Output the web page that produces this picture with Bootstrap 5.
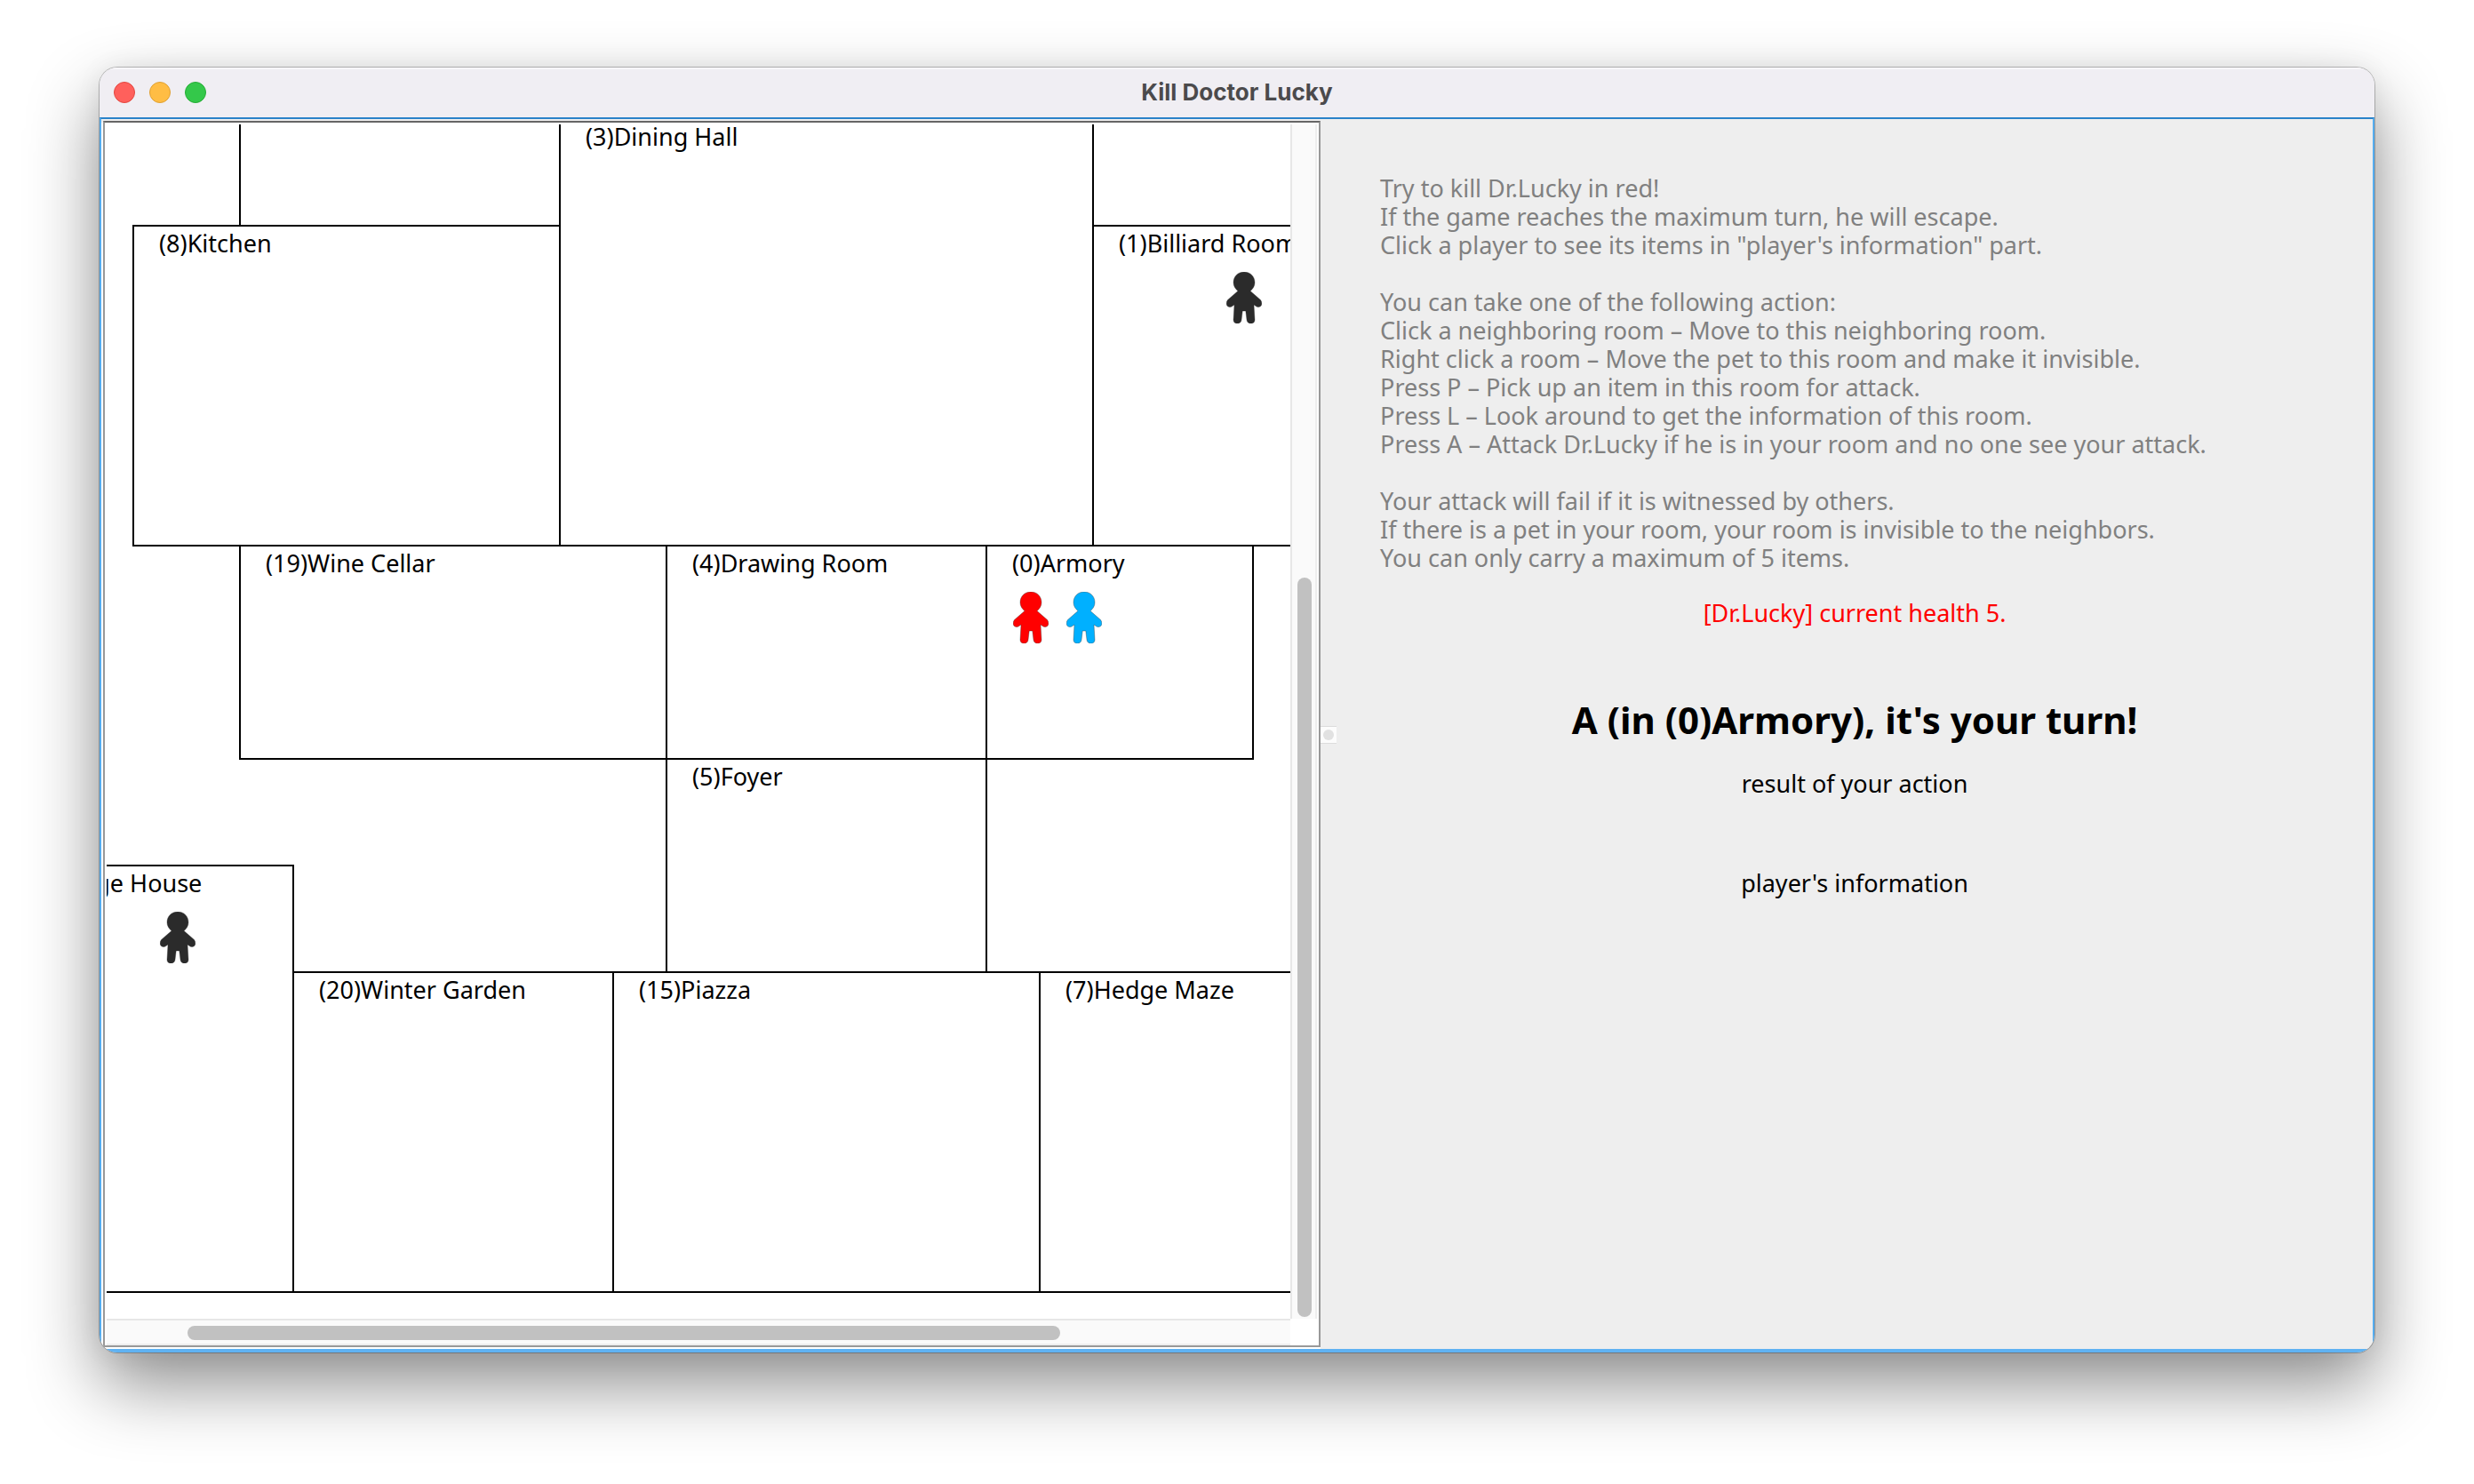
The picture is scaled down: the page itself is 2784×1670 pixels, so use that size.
<!DOCTYPE html>
<html lang="en">
<head>
<meta charset="utf-8">
<meta name="viewport" content="width=device-width, initial-scale=1">
<title>Kill Doctor Lucky</title>
<link href="https://cdn.jsdelivr.net/npm/bootstrap@5.3.0/dist/css/bootstrap.min.css" rel="stylesheet">
<style>
  body { padding: 76px 112px 148px; background: #fff; color: #000; font-family: "Noto Sans", "Open Sans", sans-serif; font-size: 27px; line-height: 32px; }
  .app-window { border-radius: 20px; background: #eee; box-shadow: 0 0 0 1px rgba(0,0,0,.24), 0 36px 80px rgba(0,0,0,.45), 0 0 30px rgba(0,0,0,.06); }
  .title-bar { height: 56px; padding: 0 16px; background: #f0eef3; box-shadow: inset 0 2px 0 #f8f7fa; }
  .title-bar h1 { font: 700 26px/32px Inter, sans-serif; color: #4b4a4c; }
  .lights { flex: 1 1 0; gap: 16px; }
  .light { width: 24px; height: 24px; border: 1px solid; border-radius: 50%; padding: 0; }
  .light-close { background: #ff605c; border-color: #e2463f; }
  .light-min { background: #ffbd44; border-color: #dfa033; }
  .light-zoom { background: #34c84a; border-color: #25ac35; }
  .split { border: 2px solid #55acee; border-top-color: #2a82c9; border-bottom: 4px solid #5fb2f2; }
  .map-side { flex: 0 0 53.68%; padding: 2px 0 2px 2px; background: linear-gradient(#eee 4px, #fff 4px); }
  .map-pane { display: grid; grid-template: minmax(0, 1fr) 30px / minmax(0, 1fr) 32px; height: 100%; padding: 2px 0 0 2px; border: 2px solid #999; border-top-color: #666; background: #fff; }
  /* rooms sit on a 60px grid; --x/--y/--w/--h are counted in cells */
  .room { position: absolute; left: calc(var(--x) * 60px - 31px); top: calc(var(--y) * 60px - 7px); width: calc(var(--w) * 60px + 2px); height: calc(var(--h) * 60px + 2px); border: 2px solid #000; padding: 3px 28px; white-space: nowrap; }
  .pawns { display: grid; grid-template-columns: repeat(auto-fill, 40px); gap: 20px; padding: 16px 1px 0; }
  .pawn { width: 40px; height: 58px; grid-row: 1; stroke: rgba(43,43,43,.35); stroke-width: 1px; overflow: visible; }
  .slot-3 { grid-column: 3; }
  .slot-4 { grid-column: 4; }
  .bar-v { width: 30px; padding: 0 4px 2px 6px; background: #fafafa; border-left: 2px solid #e7e7e7; border-right: 2px solid #eee; }
  .bar-h { padding: 6px 0 4px; background: #fafafa; border-top: 2px solid #e7e7e7; border-bottom: 2px solid #eee; }
  .thumb { background: #c1c1c1; border-radius: 8px; }
  .divider { width: 18px; padding-top: 683px; }
  .grip { height: 20px; background: #fcfcfc; border: solid #dcdcdc; border-width: 1px 0; padding: 0; }
  .grip span { width: 12px; height: 12px; border-radius: 50%; background: #e1e1e1; }
  .info-side { padding-top: 62px; }
  .rules { padding: 0 49px; color: #808080; white-space: pre-wrap; }
  .health { color: #f00; margin-top: 30px; }
  .turn { font-size: 42px; line-height: 48px; margin-top: 80px; }
  .result { margin-top: 32px; }
  .player { margin-top: 80px; }
</style>
<script src="https://cdn.jsdelivr.net/npm/bootstrap@5.3.0/dist/js/bootstrap.bundle.min.js"></script>
</head>
<body class="min-vh-100 d-flex flex-column">
<svg class="d-none" aria-hidden="true">
  <symbol id="pawn" viewBox="0 0 40 58">
    <path d="M20 0C13 0 8 5 8 12c0 4 2 7 5 9.500L1.500 31.500C-1 35-0 39 3.500 39.500c2.500.4 4-1.800 5.500-2.500L8 54c0 5.500 8.500 5.500 9 0l1.200-10h3.600L23 54c.5 5.500 9 5.500 9 0l-1-17c1.500.7 3 2.900 5.500 2.500 3.500-.5 4.500-4.500 2-8L27 21.500c3-2.500 5-5.500 5-9.500C32 5 27 0 20 0z"/>
  </symbol>
</svg>
<div class="app-window flex-fill d-flex flex-column overflow-hidden">
  <header class="title-bar d-flex align-items-center">
    <div class="lights d-flex">
      <button class="light light-close" type="button" aria-label="Close"></button>
      <button class="light light-min" type="button" aria-label="Minimize"></button>
      <button class="light light-zoom" type="button" aria-label="Zoom"></button>
    </div>
    <h1 class="m-0">Kill Doctor Lucky</h1>
    <div class="lights"></div>
  </header>
  <main class="split flex-fill d-flex">
    <section class="map-side" aria-label="Map">
      <div class="map-pane">
        <div class="position-relative overflow-hidden">
          <div class="room" style="--x:3;--y:-4;--w:6;--h:6"></div>
          <div class="room" style="--x:19;--y:-4;--w:6;--h:6"></div>
          <div class="room" style="--x:9;--y:0;--w:10;--h:8">(3)Dining Hall</div>
          <div class="room" style="--x:1;--y:2;--w:8;--h:6">(8)Kitchen</div>
          <div class="room" style="--x:19;--y:2;--w:6;--h:6">(1)Billiard Room
            <div class="pawns"><svg class="pawn slot-3" fill="#2b2b2b"><use href="#pawn"/></svg></div>
          </div>
          <div class="room" style="--x:3;--y:8;--w:8;--h:4">(19)Wine Cellar</div>
          <div class="room" style="--x:11;--y:8;--w:6;--h:4">(4)Drawing Room</div>
          <div class="room" style="--x:17;--y:8;--w:5;--h:4">(0)Armory
            <div class="pawns"><svg class="pawn" fill="#f00"><use href="#pawn"/></svg><svg class="pawn" fill="#00b0ff"><use href="#pawn"/></svg></div>
          </div>
          <div class="room" style="--x:11;--y:12;--w:6;--h:4">(5)Foyer</div>
          <div class="room" style="--x:-2;--y:14;--w:6;--h:8">(2)Carriage House
            <div class="pawns"><svg class="pawn slot-4" fill="#2b2b2b"><use href="#pawn"/></svg></div>
          </div>
          <div class="room" style="--x:4;--y:16;--w:6;--h:6">(20)Winter Garden</div>
          <div class="room" style="--x:10;--y:16;--w:8;--h:6">(15)Piazza</div>
          <div class="room" style="--x:18;--y:16;--w:8;--h:6">(7)Hedge Maze</div>
        </div>
        <div class="bar-v d-flex flex-column justify-content-end"><div class="thumb" style="height:62%"></div></div>
        <div class="bar-h d-flex"><div class="thumb" style="margin-left:6.83%;width:73.72%"></div></div>
      </div>
    </section>
    <div class="divider"><button class="grip w-100 d-flex align-items-center justify-content-center" type="button" aria-label="Resize panes"><span></span></button></div>
    <section class="info-side flex-fill">
      <div class="rules">Try to kill Dr.Lucky in red!
If the game reaches the maximum turn, he will escape.
Click a player to see its items in "player's information" part.

You can take one of the following action:
Click a neighboring room – Move to this neighboring room.
Right click a room – Move the pet to this room and make it invisible.
Press P – Pick up an item in this room for attack.
Press L – Look around to get the information of this room.
Press A – Attack Dr.Lucky if he is in your room and no one see your attack.

Your attack will fail if it is witnessed by others.
If there is a pet in your room, your room is invisible to the neighbors.
You can only carry a maximum of 5 items.</div>
      <div class="health text-center">[Dr.Lucky] current health 5.</div>
      <h2 class="turn text-center fw-bold mb-0">A (in (0)Armory), it's your turn!</h2>
      <div class="result text-center">result of your action</div>
      <div class="player text-center">player's information</div>
    </section>
  </main>
</div>
</body>
</html>
